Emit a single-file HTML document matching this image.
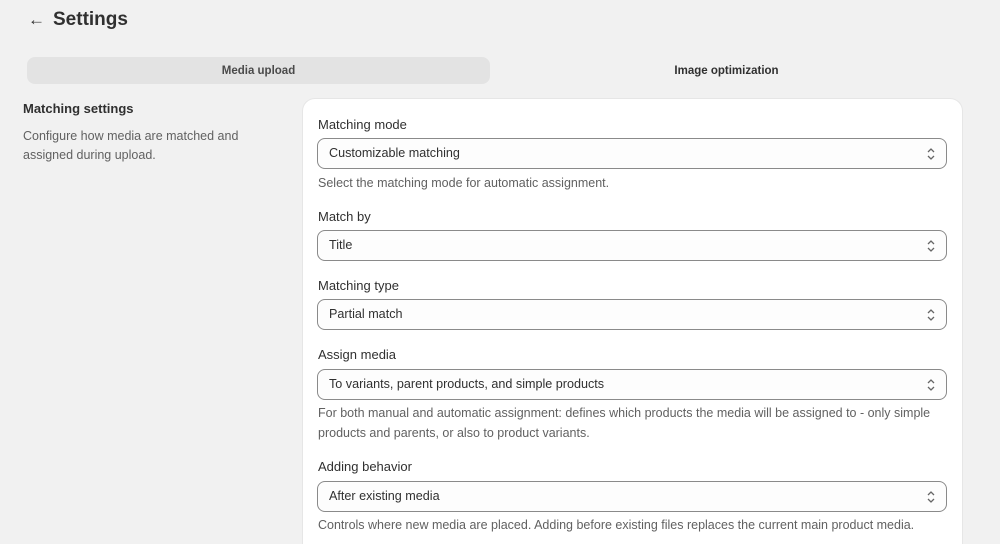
<!DOCTYPE html>
<html><head><style>
*{box-sizing:border-box;margin:0;padding:0}
html,body{width:1000px;height:544px;overflow:hidden}
body{background:#f1f1f1;font-family:"Liberation Sans",sans-serif;color:#303030;position:relative}
.a{position:absolute}
.lab{position:absolute;left:318px;font-size:13px;color:#303030}
.sel{position:absolute;left:317px;width:630px;height:31px;border:1px solid #8a8a8a;border-radius:8px;background:#fdfdfd;font-size:12.6px;padding:7px 11px;color:#303030}
.sel svg{position:absolute;right:10px;top:8px}
.help{position:absolute;left:318px;font-size:12.5px;color:#616161;line-height:20px}
</style></head><body>
<div class="a" style="left:28px;top:10px;font-size:17px;color:#303030">←</div>
<div class="a" style="left:53px;top:9px;font-size:19px;font-weight:bold;color:#303030">Settings</div>
<div class="a" style="left:27px;top:57px;width:463px;height:27px;background:#e3e3e3;border-radius:8px;font-size:11.5px;font-weight:bold;color:#4a4a4a;text-align:center;line-height:28px">Media upload</div>
<div class="a" style="left:490px;top:57px;width:473px;height:27px;font-size:11.5px;font-weight:bold;color:#303030;text-align:center;line-height:28px">Image optimization</div>
<div class="a" style="left:23px;top:101px;font-size:13px;font-weight:bold">Matching settings</div>
<div class="a" style="left:23px;top:127px;font-size:12.5px;color:#616161;line-height:19px;width:260px">Configure how media are matched and<br>assigned during upload.</div>
<div class="a" style="left:303px;top:99px;width:659px;height:460px;background:#fff;border-radius:12px;box-shadow:0 0 0 1px #e6e6e6"></div>

<div class="lab" style="top:117px">Matching mode</div>
<div class="sel" style="top:138px">Customizable matching<svg width="10" height="14" viewBox="0 0 10 14"><path d="M2 5l3-3 3 3M2 9l3 3 3-3" fill="none" stroke="#666" stroke-width="1.3"/></svg></div>
<div class="help" style="top:173px">Select the matching mode for automatic assignment.</div>

<div class="lab" style="top:209px">Match by</div>
<div class="sel" style="top:230px">Title<svg width="10" height="14" viewBox="0 0 10 14"><path d="M2 5l3-3 3 3M2 9l3 3 3-3" fill="none" stroke="#666" stroke-width="1.3"/></svg></div>

<div class="lab" style="top:278px">Matching type</div>
<div class="sel" style="top:299px">Partial match<svg width="10" height="14" viewBox="0 0 10 14"><path d="M2 5l3-3 3 3M2 9l3 3 3-3" fill="none" stroke="#666" stroke-width="1.3"/></svg></div>

<div class="lab" style="top:347px">Assign media</div>
<div class="sel" style="top:369px">To variants, parent products, and simple products<svg width="10" height="14" viewBox="0 0 10 14"><path d="M2 5l3-3 3 3M2 9l3 3 3-3" fill="none" stroke="#666" stroke-width="1.3"/></svg></div>
<div class="help" style="top:403px">For both manual and automatic assignment: defines which products the media will be assigned to - only simple<br>products and parents, or also to product variants.</div>

<div class="lab" style="top:459px">Adding behavior</div>
<div class="sel" style="top:481px">After existing media<svg width="10" height="14" viewBox="0 0 10 14"><path d="M2 5l3-3 3 3M2 9l3 3 3-3" fill="none" stroke="#666" stroke-width="1.3"/></svg></div>
<div class="help" style="top:515px">Controls where new media are placed. Adding before existing files replaces the current main product media.</div>
</body></html>
